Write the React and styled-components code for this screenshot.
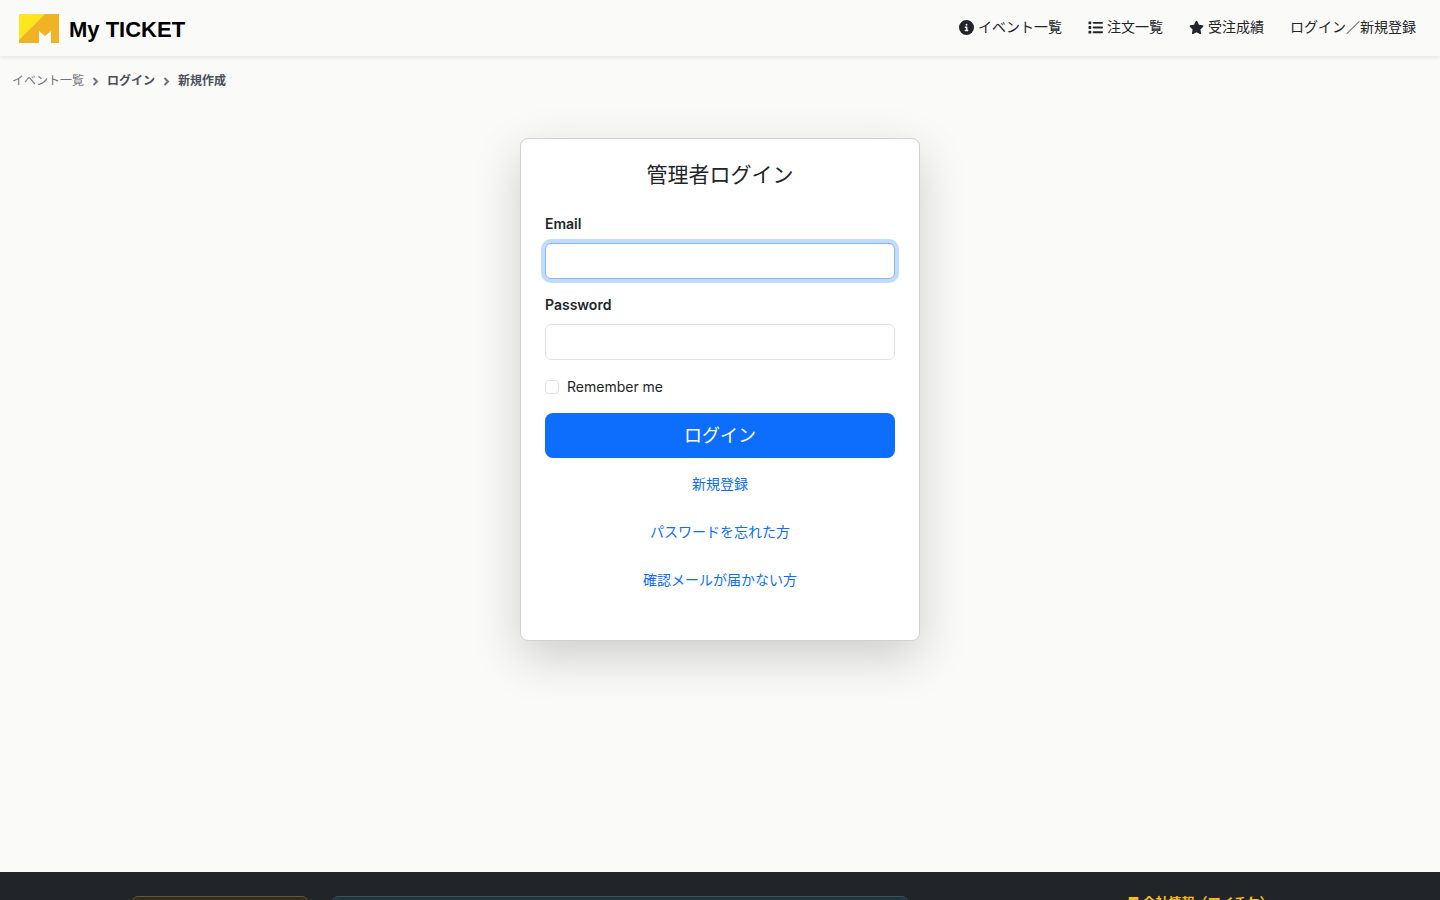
import { createGlobalStyle, styled } from 'styled-components'
import { FaCircleInfo, FaList, FaStar } from 'react-icons/fa6'

const colors = {
  page: '#fafaf8',
  text: '#212529',
  muted: '#6c757d',
  crumb: '#495057',
  border: '#dee2e6',
  primary: '#0d6efd',
  warning: '#ffc107',
}

const GlobalStyle = createGlobalStyle`
  *,
  *::before,
  *::after {
    box-sizing: border-box;
  }
  body {
    margin: 0;
    background-color: ${colors.page};
    color: ${colors.text};
    font-family: Inter, 'Noto Sans CJK JP', sans-serif;
    font-size: 14px;
    line-height: 22px;
  }
  a {
    text-decoration: none;
  }
`

const Header = styled.header`
  display: flex;
  align-items: center;
  justify-content: space-between;
  height: 56px;
  padding: 0 24px 0 19px;
  box-shadow: 0 2px 4px rgba(0, 0, 0, 0.08);
`

const Brand = styled.a`
  display: flex;
  align-items: flex-end;
  gap: 10px;
  color: #000;
  font-family: 'Liberation Sans', sans-serif;
  font-size: 22px;
  font-weight: 700;
  line-height: 26px;
`

const Nav = styled.nav`
  display: flex;
  gap: 26px;
  padding-bottom: 2px;
`

const NavItem = styled.a`
  display: flex;
  align-items: center;
  gap: 4px;
  color: ${colors.text};
`

const Breadcrumb = styled.nav`
  padding: 15px 12px 13px;
  font-size: 12px;
  line-height: 20px;

  ol {
    display: flex;
    gap: 8px;
    margin: 0;
    padding: 0;
    list-style: none;
  }
`

const Crumb = styled.li`
  display: flex;
  align-items: center;
  gap: 8px;
  color: ${colors.crumb};
  font-weight: ${({ $strong }) => ($strong ? 700 : 400)};

  a {
    color: ${({ $strong }) => ($strong ? colors.crumb : colors.muted)};
  }
`

const Main = styled.main`
  display: flex;
  justify-content: center;
  padding: 34px 12px 231px;
`

const Card = styled.section`
  width: 100%;
  max-width: 400px;
  padding: 20px 24px 49px;
  background-color: #fff;
  border: 1px solid #d2d2d2;
  border-radius: 8px;
  box-shadow: 0 16px 48px rgba(0, 0, 0, 0.18);
`

const Title = styled.h1`
  margin: 0 0 22px;
  font-size: 21px;
  font-weight: 400;
  line-height: 32px;
  text-align: center;
`

const Field = styled.div`
  display: flex;
  flex-direction: column;
  gap: 8px;
  margin-bottom: 15px;
`

const Label = styled.label`
  font-weight: 600;
`

const Input = styled.input`
  width: 100%;
  height: 36px;
  padding: 6px 12px;
  border: 1px solid ${colors.border};
  border-radius: 6px;
  background-color: #fff;
  color: ${colors.text};
  font: inherit;

  &:focus {
    border-color: #86b7fe;
    outline: 0;
    box-shadow: 0 0 0 4px rgba(13, 110, 253, 0.25);
  }
`

const CheckRow = styled.div`
  display: flex;
  align-items: center;
  gap: 8px;
  margin-bottom: 14px;
  line-height: 24px;
`

const Checkbox = styled.input`
  appearance: none;
  width: 14px;
  height: 14px;
  margin: 0;
  border: 1px solid ${colors.border};
  border-radius: 4px;
  background-color: #fff;

  &:checked {
    border-color: ${colors.primary};
    background-color: ${colors.primary};
  }
`

const SubmitButton = styled.button`
  display: block;
  width: 100%;
  height: 45px;
  margin-bottom: 15px;
  padding: 0 0 4px;
  border: 0;
  border-radius: 8px;
  background-color: ${colors.primary};
  color: #fff;
  font-family: inherit;
  font-size: 18px;
  font-weight: 400;
  cursor: pointer;
`

const Links = styled.div`
  display: flex;
  flex-direction: column;
  align-items: center;
  gap: 26px;

  a {
    color: ${colors.primary};
  }
`

const Footer = styled.footer`
  background-color: ${colors.text};
  padding: 24px 120px;
`

const FooterGrid = styled.div`
  display: grid;
  grid-template-columns: 5fr 15fr 10fr;
`

const FooterColumn = styled.div`
  padding: 0 12px;
`

const CompanyColumn = styled.div`
  width: 60%;
  margin-left: auto;
`

const FooterBox = styled.div`
  height: 160px;
  border: 1px solid ${({ $tone }) => ($tone === 'gold' ? '#6f581b' : '#2b5663')};
  border-radius: 6px;
  background-color: ${({ $tone }) => ($tone === 'gold' ? '#2e2c29' : '#24323a')};
`

const FooterHeading = styled.h2`
  margin: 0;
  color: ${colors.warning};
  font-size: 13px;
  font-weight: 700;
  line-height: 12px;
  text-align: center;
`

function Logo() {
  return (
    <svg width="40" height="29" viewBox="0 0 40 29" aria-hidden="true">
      <path fill="#f0b323" d="M0 0h40v29h-8V17l-6 5-6-5v12H0z" />
      <path fill="#ffe51e" d="M0 0h26L0 26z" />
    </svg>
  )
}

function Chevron() {
  return (
    <svg width="7" height="10" viewBox="0 0 7 10" aria-hidden="true">
      <path
        d="M1.500 2l3.500 3.500L1.500 9"
        fill="none"
        stroke="#6c757d"
        strokeWidth="2"
      />
    </svg>
  )
}

function App() {
  return (
    <>
      <GlobalStyle />
      <Header>
        <Brand href="#">
          <Logo />
          My TICKET
        </Brand>
        <Nav aria-label="メイン">
          <NavItem href="#">
            <FaCircleInfo size={15} />
            イベント一覧
          </NavItem>
          <NavItem href="#">
            <FaList size={15} />
            注文一覧
          </NavItem>
          <NavItem href="#">
            <FaStar size={15} />
            受注成績
          </NavItem>
          <NavItem href="#">ログイン／新規登録</NavItem>
        </Nav>
      </Header>
      <Breadcrumb aria-label="パンくず">
        <ol>
          <Crumb>
            <a href="#">イベント一覧</a>
            <Chevron />
          </Crumb>
          <Crumb $strong>
            <a href="#">ログイン</a>
            <Chevron />
          </Crumb>
          <Crumb $strong aria-current="page">
            新規作成
          </Crumb>
        </ol>
      </Breadcrumb>
      <Main>
        <Card>
          <Title>管理者ログイン</Title>
          <form onSubmit={(e) => e.preventDefault()}>
            <Field>
              <Label htmlFor="email">Email</Label>
              <Input id="email" type="email" autoFocus />
            </Field>
            <Field>
              <Label htmlFor="password">Password</Label>
              <Input id="password" type="password" />
            </Field>
            <CheckRow>
              <Checkbox id="remember" type="checkbox" />
              <label htmlFor="remember">Remember me</label>
            </CheckRow>
            <SubmitButton type="submit">ログイン</SubmitButton>
          </form>
          <Links>
            <a href="#">新規登録</a>
            <a href="#">パスワードを忘れた方</a>
            <a href="#">確認メールが届かない方</a>
          </Links>
        </Card>
      </Main>
      <Footer>
        <FooterGrid>
          <FooterColumn>
            <FooterBox $tone="gold" />
          </FooterColumn>
          <FooterColumn>
            <FooterBox $tone="teal" />
          </FooterColumn>
          <CompanyColumn>
            <FooterHeading>■ 会社情報（マイチケ）</FooterHeading>
          </CompanyColumn>
        </FooterGrid>
      </Footer>
    </>
  )
}

export default App
